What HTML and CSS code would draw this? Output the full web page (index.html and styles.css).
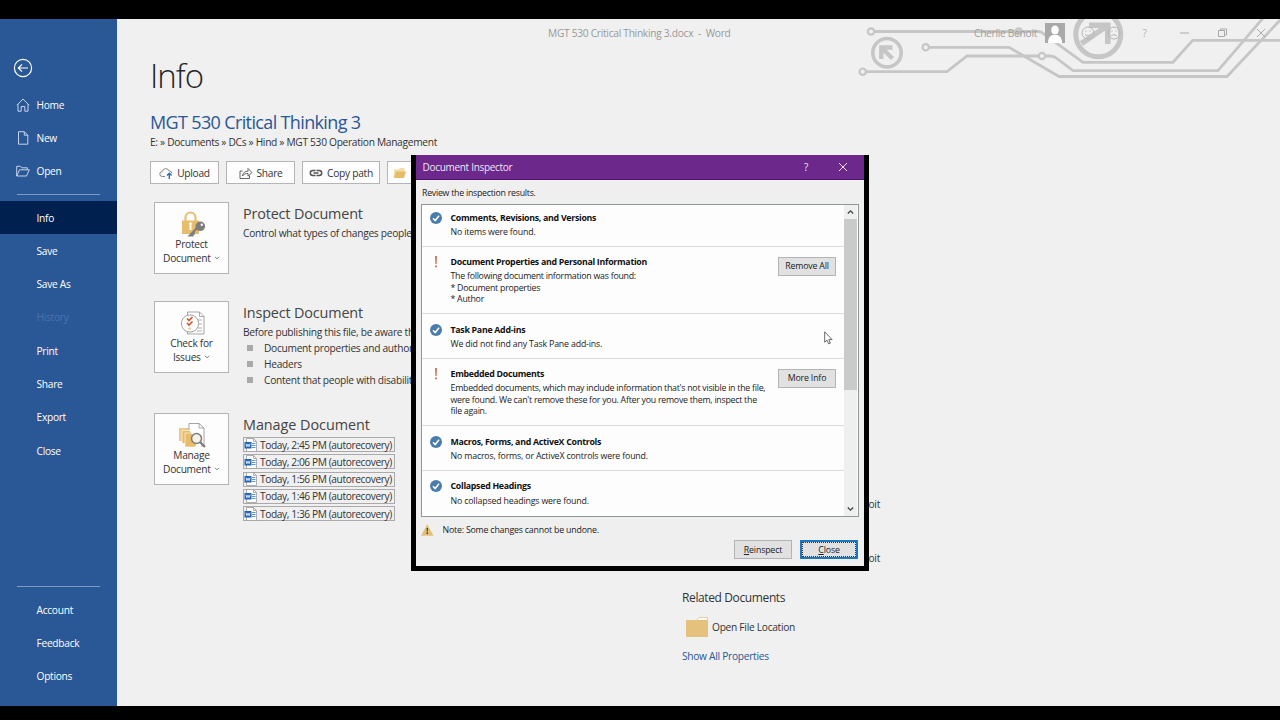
FILE: index.html
```html
<!DOCTYPE html>
<html lang="en">
<head>
  <meta charset="UTF-8">
  <meta name="viewport" content="width=device-width, initial-scale=1.0">
  <title>MGT 530 Critical Thinking 3.docx - Word</title>
  <link rel="stylesheet" href="styles.css">
</head>
<body>
  <!-- Shared icons -->
  <svg class="sprite" aria-hidden="true">
    <symbol id="ok" viewBox="0 0 12 12">
      <circle cx="6" cy="6" r="6" fill="#4a7dae"/>
      <path d="M3 6.2l2.2 2.3L9 3.8" fill="none" stroke="#fff" stroke-width="1.5"/>
    </symbol>
    <symbol id="doc" viewBox="0 0 13 14">
      <path d="M2.5.5h7l3 3v10h-10z" fill="#fff" stroke="#9a9a9a" stroke-width=".8"/>
      <path d="M9.5.5v3h3" fill="none" stroke="#9a9a9a" stroke-width=".8"/>
      <path d="M8 5.5h3.5M8 7.5h3.5M8 9.5h3.5" stroke="#5b93d6" stroke-width="1"/>
      <path d="M.5 4h7v6.500h-7z" fill="#2463b4"/>
      <path d="M2 5.700l.9 3 1.100-2.600 1.100 2.600.9-3" fill="none" stroke="#fff" stroke-width=".8"/>
    </symbol>
    <symbol id="chev" viewBox="0 0 6 4">
      <path d="M1 .8l2 2 2-2" fill="none" stroke="#555" stroke-width=".8"/>
    </symbol>
  </svg>

  <div class="app">
    <nav class="sidebar">
      <svg class="back" viewBox="0 0 20 20">
        <circle cx="10" cy="10" r="8.600"/>
        <path d="M15 10H5.500M9 6.300L5.300 10 9 13.700"/>
      </svg>
      <a class="item"><svg viewBox="0 0 14 14"><path d="M.8 7.300L7 1l6.200 6.300M2 6.200v7h3.200V8.500h3.600v4.700H12v-7"/></svg>Home</a>
      <a class="item"><svg viewBox="0 0 14 14"><path d="M2.500.7h5.800l3.500 3.500v9H2.500zM8.300.7v3.500h3.500"/></svg>New</a>
      <a class="item"><svg viewBox="0 0 14 14"><path d="M.7 12V2.300h3.800l1.300 1.500h5.500v2M.7 12L3.500 5.800h9.800L10.500 12z"/></svg>Open</a>
      <hr>
      <a class="item active">Info</a>
      <a class="item">Save</a>
      <a class="item">Save As</a>
      <a class="item disabled">History</a>
      <a class="item">Print</a>
      <a class="item">Share</a>
      <a class="item">Export</a>
      <a class="item">Close</a>
      <hr class="push">
      <a class="item">Account</a>
      <a class="item">Feedback</a>
      <a class="item">Options</a>
    </nav>

    <main class="main">
      <svg class="circuit" viewBox="850 19 430 70">
        <g fill="none" stroke="#c6c6c6" stroke-width="2.800">
          <path d="M874 31.500H1038q3 0 5 1.800L1083 62.300h90l19.700-22H1280"/>
          <path d="M929 47.300h80L1059 76.500h168L1283 17"/>
          <path d="M866 71.700h81L967 56h72M1045 56h5q4 0 7 2.500L1073 70.700h145L1264 17"/>
          <g stroke-width="2.200">
            <circle cx="871" cy="31.500" r="3.200"/>
            <circle cx="1018.700" cy="31.500" r="3.200"/>
            <circle cx="925.700" cy="47.300" r="3.200"/>
            <circle cx="862.700" cy="71.700" r="3.200"/>
            <circle cx="1042" cy="56" r="3.200" fill="#f0f0f0"/>
          </g>
          <circle cx="887" cy="52.700" r="14.200" stroke-width="3.600"/>
          <path d="M881.300 59V47.500H892.500M882 48.200L892.500 58.500" stroke-width="4.400"/>
          <circle cx="1098.300" cy="34.300" r="22.500" stroke-width="5" fill="#f0f0f0"/>
          <path d="M1089 25.200H1107.800V44M1107 26L1081.500 43.500" stroke-width="5.600"/>
        </g>
      </svg>

      <header class="titlebar">
        <span class="doc-name">MGT 530 Critical Thinking 3.docx&nbsp; -&nbsp; Word</span>
        <span class="user">Cherlie Benoit</span>
        <svg class="avatar" viewBox="0 0 20 20">
          <path d="M0 0h20v20H0z" fill="#a9a9a9"/>
          <ellipse cx="10" cy="7" rx="3.800" ry="4.500" fill="#fff"/>
          <path d="M3 20c0-5 2-7.500 5-8h4c3 .5 5 3 5 8z" fill="#fff"/>
        </svg>
        <svg class="faces" viewBox="0 0 40 14">
          <circle cx="7" cy="7" r="6"/><path d="M4 8.500q3 3 6 0M5 4.500v1.200M9 4.500v1.200"/>
          <circle cx="33" cy="7" r="6"/><path d="M30 10q3-3 6 0M31 4.500v1.200M35 4.500v1.200"/>
        </svg>
        <span class="help">?</span>
        <svg class="win" viewBox="0 0 90 12">
          <path d="M1 6h9M39.500 3.500h6v6h-6zM41.500 3.500v-1.500h6v6h-2M78 2l8 8M86 2l-8 8"/>
        </svg>
      </header>

      <h1>Info</h1>
      <h2>MGT 530 Critical Thinking 3</h2>
      <p class="path">E: » Documents » DCs » Hind » MGT 530 Operation Management</p>

      <div class="toolbar">
        <button class="tool upload"><svg viewBox="0 0 14 12"><path d="M6 9.500H3.300a2.500 2.500 0 0 1 0-5 3.600 3.600 0 0 1 6.900-.5 2.500 2.500 0 0 1 2.600 2.500" fill="none" stroke="#777" stroke-width=".9"/><path d="M10.300 12V6.500M8 8.600l2.300-2.300 2.300 2.300" fill="none" stroke="#2a6fb5" stroke-width="1.400"/></svg>Upload</button>
        <button class="tool share"><svg viewBox="0 0 14 12"><path d="M3.500 4H1v7.500h9.500V8.500M3.500 9c.5-3.500 2.500-4.800 5.500-4.800V1.500l4 4-4 3.700V6.500C6.500 6.300 5 7 3.500 9z" fill="none" stroke="#555" stroke-width=".9"/></svg>Share</button>
        <button class="tool copy"><svg viewBox="0 0 14 12"><path d="M6.500 3.500H3.800a2.500 2.500 0 0 0 0 5h2.700M7.500 3.500h2.700a2.500 2.500 0 0 1 0 5H7.500M4.500 6h5" fill="none" stroke="#555" stroke-width="1.500"/></svg>Copy path</button>
        <button class="tool location"><svg viewBox="0 0 14 12"><path d="M1 11V2.500h4.500L7 1h4.500v3.500" fill="#f3dca8"/><path d="M1 11l2-6.500h10L11 11z" fill="#e5bd69"/></svg></button>
      </div>

      <div class="columns">
        <div class="actions">
          <section class="action">
            <button class="tile">
              <svg viewBox="0 0 28 28">
                <path d="M7.500 12V7.500a5 5 0 0 1 10 0V12" fill="none" stroke="#e7c078" stroke-width="2.200"/>
                <path d="M4 10.500h17V24H4z" fill="#e7bd6b"/>
                <path d="M11.500 15a1.500 1.500 0 1 1 2 0v5h-2z" fill="#fff"/>
                <path d="M20 17l-8 8.500h2.500l.5-2h2" fill="none" stroke="#7d7d7d" stroke-width="2.200"/>
                <circle cx="22.300" cy="16.300" r="4.800" fill="#7d7d7d"/><circle cx="23.800" cy="14.800" r="1.200" fill="#fff"/>
              </svg>
              <span>Protect</span>
              <span>Document <svg class="chev"><use href="#chev"/></svg></span>
            </button>
            <div class="about">
              <h3>Protect Document</h3>
              <p>Control what types of changes people</p>
            </div>
          </section>

          <section class="action">
            <button class="tile">
              <svg viewBox="0 0 28 28">
                <path d="M9.500 3h12l4.500 4.500V25H9.500z" fill="#fff" stroke="#9b9b9b" stroke-width=".9"/>
                <path d="M21.500 3v4.500H26M20 11h4M21 15h3M20 19h4M19 22h5" fill="none" stroke="#9b9b9b" stroke-width=".8"/>
                <circle cx="12" cy="14.500" r="8.600" fill="#fff" stroke="#a0a0a0"/>
                <path d="M9 9.500l2 2 3.500-3.500M9 14l2 2 3.500-3.500" fill="none" stroke="#d4582e" stroke-width="1.700"/>
                <circle cx="11.500" cy="19.500" r="1.300" fill="#e6ca8a"/>
              </svg>
              <span>Check for</span>
              <span>Issues <svg class="chev"><use href="#chev"/></svg></span>
            </button>
            <div class="about">
              <h3>Inspect Document</h3>
              <p>Before publishing this file, be aware th</p>
              <ul>
                <li>Document properties and author'</li>
                <li>Headers</li>
                <li>Content that people with disabilit</li>
              </ul>
            </div>
          </section>

          <section class="action">
            <button class="tile">
              <svg viewBox="0 0 28 28">
                <path d="M1 7h11v13H1z" fill="#edc98a"/>
                <path d="M4 9.500h11v13H4z" fill="#e7bd6b" stroke="#fff" stroke-width=".6"/>
                <path d="M7 12h11v14H7z" fill="#e7bd6b" stroke="#fff" stroke-width=".6"/>
                <path d="M11 9V2.500h10L26 7v18h-3" fill="#fff" stroke="#9b9b9b" stroke-width=".9"/>
                <path d="M21 2.500V7h5" fill="none" stroke="#9b9b9b" stroke-width=".8"/>
                <circle cx="18.500" cy="17.500" r="5" fill="#f7f2e6" stroke="#7d7d7d" stroke-width="1.500"/>
                <path d="M22 21l5 5" stroke="#7d7d7d" stroke-width="2.200"/>
              </svg>
              <span>Manage</span>
              <span>Document <svg class="chev"><use href="#chev"/></svg></span>
            </button>
            <div class="about">
              <h3 class="wide">Manage Document</h3>
              <div class="versions">
                <a><svg><use href="#doc"/></svg>Today, 2:45 PM (autorecovery)</a>
                <a><svg><use href="#doc"/></svg>Today, 2:06 PM (autorecovery)</a>
                <a><svg><use href="#doc"/></svg>Today, 1:56 PM (autorecovery)</a>
                <a><svg><use href="#doc"/></svg>Today, 1:46 PM (autorecovery)</a>
                <a><svg><use href="#doc"/></svg>Today, 1:36 PM (autorecovery)</a>
              </div>
            </div>
          </section>
        </div>

        <aside class="props">
          <p class="person">Cherlie Benoit</p>
          <p class="person">Cherlie Benoit</p>
          <h4>Related Documents</h4>
          <a class="open-location"><svg viewBox="0 0 22 20"><path d="M11 3l2-2.500h8.500V5" fill="#fff" stroke="#e5c27c" stroke-width=".8"/><path d="M0 3h22v17H0z" fill="#e5c27c"/></svg>Open File Location</a>
          <a class="all">Show All Properties</a>
        </aside>
      </div>
    </main>
  </div>

  <!-- Document Inspector window -->
  <div class="dialog">
    <div class="dialog-title">
      <span>Document Inspector</span>
      <span class="dialog-help">?</span>
      <svg viewBox="0 0 10 10"><path d="M1 1l8 8M9 1L1 9"/></svg>
    </div>
    <div class="dialog-body">
      <p class="review">Review the inspection results.</p>
      <div class="results">
        <div class="rows">
          <div class="row">
            <svg class="ok"><use href="#ok"/></svg>
            <div class="text"><b>Comments, Revisions, and Versions</b><p>No items were found.</p></div>
          </div>
          <div class="row warn">
            <svg class="bang" viewBox="0 0 12 12"><path d="M5.200 0h1.600l-.3 8h-1zM5.200 9.600h1.600v1.700H5.200z"/></svg>
            <div class="text"><b>Document Properties and Personal Information</b><p>The following document information was found:<br>* Document properties<br>* Author</p></div>
            <button>Remove All</button>
          </div>
          <div class="row">
            <svg class="ok"><use href="#ok"/></svg>
            <div class="text"><b>Task Pane Add-ins</b><p>We did not find any Task Pane add-ins.</p></div>
          </div>
          <div class="row warn">
            <svg class="bang" viewBox="0 0 12 12"><path d="M5.200 0h1.600l-.3 8h-1zM5.200 9.600h1.600v1.700H5.200z"/></svg>
            <div class="text"><b>Embedded Documents</b><p>Embedded documents, which may include information that's not visible in the file,<br>were found. We can't remove these for you. After you remove them, inspect the<br>file again.</p></div>
            <button>More Info</button>
          </div>
          <div class="row">
            <svg class="ok"><use href="#ok"/></svg>
            <div class="text"><b>Macros, Forms, and ActiveX Controls</b><p>No macros, forms, or ActiveX controls were found.</p></div>
          </div>
          <div class="row">
            <svg class="ok"><use href="#ok"/></svg>
            <div class="text"><b>Collapsed Headings</b><p>No collapsed headings were found.</p></div>
          </div>
        </div>
        <div class="scrollbar">
          <svg viewBox="0 0 13 14"><path d="M3.800 8.500l2.700-2.700 2.700 2.700"/></svg>
          <div class="thumb"></div>
          <svg class="down" viewBox="0 0 13 14"><path d="M3.800 5.500l2.700 2.700 2.700-2.700"/></svg>
        </div>
      </div>
      <div class="note">
        <svg viewBox="0 0 13 12"><path d="M6.500 0L13 12H0z" fill="#e3bf79"/><path d="M5.800 3.800h1.400l-.3 4h-.8zM5.800 8.700h1.400v1.500H5.800z" fill="#333"/></svg>
        Note: Some changes cannot be undone.
      </div>
      <div class="buttons">
        <button><u>R</u>einspect</button>
        <button class="primary"><u>C</u>lose</button>
      </div>
    </div>
  </div>

  <svg class="cursor" viewBox="0 0 9 14"><path d="M.7.8v10.400l2.300-2 1.700 3.700 1.700-.8-1.600-3.500h3.300z"/></svg>
</body>
</html>
```
FILE: styles.css
```css
* {
  box-sizing: border-box;
}

body {
  margin: 0;
  width: 1280px;
  height: 720px;
  padding: 19px 0 14px;
  background: #000;
  color: #333;
  font-family: "Open Sans", "Noto Sans", sans-serif;
  font-size: 10.2px;
  letter-spacing: -0.28px;
  overflow: hidden;
}

h1, h2, h3, h4, p, ul {
  margin: 0;
  padding: 0;
  font-weight: 400;
}

button {
  font: inherit;
  color: inherit;
  letter-spacing: inherit;
  padding: 0;
}

.sprite {
  position: absolute;
  width: 0;
  height: 0;
}

.app {
  display: flex;
  height: 687px;
  background: #f0f0f0;
}

/* Sidebar */
.sidebar {
  width: 116.5px;
  flex: none;
  display: flex;
  flex-direction: column;
  padding: 39px 0 13px;
  background: #2a5795;
  color: #fff;
}

.sidebar svg {
  fill: none;
  stroke: #d5e2f3;
  stroke-width: 0.9;
}

.back {
  width: 20px;
  height: 20px;
  margin: 0 0 10px 13px;
  flex: none;
}

.sidebar .back {
  stroke: #fff;
  stroke-width: 1.2;
}

.item {
  display: flex;
  align-items: center;
  height: 33.3px;
  flex: none;
  padding-left: 36.5px;
}

.item svg {
  width: 14px;
  height: 14px;
  margin: 0 6.5px 0 -20.5px;
}

.sidebar hr {
  width: 83px;
  margin: 6px 0 6px 17px;
  border: 0;
  border-top: 1px solid #7f9cc4;
}

.sidebar .push {
  margin-top: auto;
}

.active {
  background: #00204f;
}

.disabled {
  color: #4a74ae;
}

/* Main pane */
.main {
  position: relative;
  flex: 1;
  min-width: 0;
  padding-left: 33.5px;
}

.circuit {
  position: absolute;
  top: 0;
  right: 0;
  width: 430px;
  height: 70px;
}

.titlebar {
  position: relative;
  display: flex;
  align-items: center;
  height: 28px;
  padding-left: 398px;
  color: #a0a0a0;
}

.titlebar > * {
  flex: none;
}

.doc-name {
  width: 426px;
  color: #999;
  white-space: pre;
}

.user {
  width: 70.5px;
  white-space: nowrap;
}

.avatar {
  width: 20px;
  height: 20px;
}

.faces {
  width: 40px;
  height: 14px;
  margin-left: 16px;
  fill: none;
  stroke: #b5b5b5;
}

.help {
  width: 36px;
  margin-left: 22px;
  color: #b0b0b0;
}

.win {
  width: 90px;
  height: 12px;
  fill: none;
  stroke: #aaa;
}

h1 {
  margin-top: 5px;
  font-size: 33px;
  font-weight: 300;
  line-height: 48px;
  letter-spacing: -1px;
  color: #262626;
}

h2 {
  margin-top: 9px;
  font-size: 18px;
  line-height: 26px;
  letter-spacing: -0.64px;
  color: #2a5795;
}

.path {
  line-height: 14px;
  letter-spacing: -0.3px;
}

.toolbar {
  display: flex;
  gap: 7px;
  margin-top: 12px;
}

.tool {
  display: flex;
  align-items: center;
  justify-content: center;
  gap: 4px;
  width: 69px;
  height: 23px;
  background: #fdfdfd;
  border: 1px solid #b5b5b5;
  white-space: nowrap;
}

.tool svg {
  width: 14px;
  height: 12px;
}

.copy {
  width: 78px;
}

.location {
  width: 120px;
  justify-content: flex-start;
  padding-left: 5px;
}

.columns {
  display: flex;
  padding: 18px 0 0 4px;
}

.actions {
  width: 528px;
  display: flex;
  flex-direction: column;
  gap: 27px;
}

.action {
  display: flex;
  gap: 14px;
  height: 72px;
}

.action:nth-child(2) {
  height: 85px;
}

.tile {
  display: flex;
  flex-direction: column;
  align-items: center;
  width: 75px;
  height: 72px;
  flex: none;
  padding-top: 7px;
  background: #fdfdfd;
  border: 1px solid #b5b5b5;
  line-height: 13.5px;
}

.tile > svg {
  width: 28px;
  height: 28px;
}

.tile .chev {
  width: 6px;
  height: 4px;
  margin: 0 0 2px 1px;
}

.about {
  white-space: nowrap;
}

h3 {
  font-size: 14.4px;
  line-height: 20px;
  margin-top: 2px;
  letter-spacing: -0.16px;
  color: #444;
}

.wide {
  letter-spacing: -0.05px;
}

.about p {
  line-height: 18px;
}

.about ul {
  list-style: none;
  margin-top: -1px;
}

.about li {
  display: flex;
  align-items: center;
  gap: 11px;
  height: 16px;
  padding-left: 4px;
}

.about li::before {
  content: "";
  width: 6px;
  height: 6px;
  background: #aaa;
}

.versions {
  display: flex;
  flex-direction: column;
  align-items: flex-start;
  gap: 2.3px;
  margin-top: 2px;
}

.versions a {
  display: flex;
  align-items: center;
  width: 152px;
  height: 15px;
  border: 1px solid #aaa;
  letter-spacing: -0.4px;
}

.versions svg {
  width: 13px;
  height: 14px;
  flex: none;
  margin-right: 3px;
}

/* Properties column */
.props {
  padding-top: 294px;
  display: flex;
  flex-direction: column;
  align-items: flex-start;
}

.person {
  width: 198px;
  height: 54px;
  line-height: 16px;
  text-align: right;
}

h4 {
  margin-top: -14px;
  font-size: 12px;
  line-height: 16px;
  letter-spacing: -0.38px;
}

.open-location {
  display: flex;
  align-items: center;
  gap: 4px;
  margin: 11px 0 0 4px;
}

.open-location svg {
  width: 22px;
  height: 20px;
}

.all {
  margin-top: 12px;
  color: #2a5795;
}

/* Document Inspector */
.dialog {
  position: absolute;
  left: 411px;
  top: 155px;
  width: 458px;
  height: 416px;
  border: 5px solid #000;
  border-top: 0;
  background: #efefef;
  color: #222;
  font-size: 8.8px;
  letter-spacing: -0.17px;
}

.dialog-title {
  display: flex;
  align-items: center;
  height: 25px;
  padding: 0 16px 0 6.5px;
  background: #6c288a;
  border-bottom: 1px solid #4f1270;
  color: #f0e4f5;
  font-size: 10px;
  letter-spacing: -0.3px;
}

.dialog-help {
  margin-left: auto;
  margin-right: 30px;
}

.dialog-title svg {
  width: 10px;
  height: 10px;
  stroke: #f0e4f5;
}

.dialog-body {
  padding: 7px 5px 0;
}

.review {
  line-height: 12px;
  padding-left: 1px;
  letter-spacing: -0.26px;
}

.results {
  display: flex;
  height: 313px;
  margin-top: 5px;
  border: 1px solid #8e9696;
  background: #fdfdfd;
}

.rows {
  flex: 1;
  overflow: hidden;
}

.row {
  display: flex;
  position: relative;
  padding: 8.5px 8px 7.4px;
  border-bottom: 1px solid #dcdcdc;
}

.row:first-child {
  padding-top: 5.5px;
}

.row:last-child {
  border-bottom: 0;
}

.row > svg {
  width: 12px;
  height: 12px;
  flex: none;
  margin: 1px 8.5px 0 0;
}

.bang {
  fill: #c4532f;
}

.text b {
  display: block;
  line-height: 14px;
  letter-spacing: -0.28px;
  color: #111;
}

.text p {
  margin-top: 2.2px;
  line-height: 11.5px;
  white-space: nowrap;
}

.warn p {
  letter-spacing: -0.255px;
}

.dialog button {
  width: 58px;
  height: 19px;
  background: #e1e1e1;
  border: 1px solid #b4b4b4;
}

.row button {
  position: absolute;
  right: 8px;
  top: 10px;
}

.scrollbar {
  width: 13px;
  display: flex;
  flex-direction: column;
  margin-right: 1px;
  background: #efefef;
}

.scrollbar svg {
  width: 13px;
  height: 14px;
  fill: none;
  stroke: #444;
  stroke-width: 1.3;
}

.thumb {
  height: 171px;
  background: #cacaca;
}

.down {
  margin-top: auto;
}

.note {
  display: flex;
  align-items: center;
  gap: 9px;
  height: 14px;
  margin-top: 6px;
  letter-spacing: -0.2px;
}

.note svg {
  width: 12.5px;
  height: 12px;
}

.buttons {
  display: flex;
  justify-content: flex-end;
  gap: 8px;
  margin-top: 3px;
  padding-right: 1px;
}

.buttons .primary {
  border: 2px solid #1a78c2;
  outline: 1px dotted #333;
  outline-offset: -3px;
}

.cursor {
  position: absolute;
  left: 824px;
  top: 331px;
  width: 9px;
  height: 14px;
  fill: #fff;
  stroke: #444;
  stroke-width: 0.8;
}
```
